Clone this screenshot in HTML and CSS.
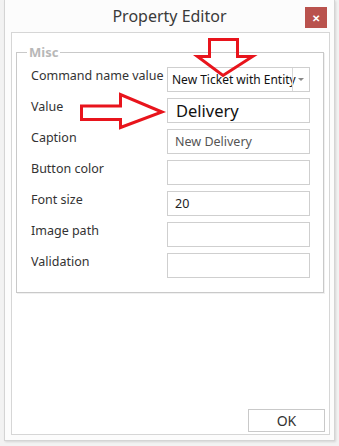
FILE: index.html
```html
<!DOCTYPE html>
<html lang="en">
<head>
  <meta charset="UTF-8">
  <title>Property Editor</title>
  <link rel="stylesheet" href="styles.css">
</head>
<body>
  <div class="window">
    <div class="titlebar">
      <span class="title">Property Editor</span>
      <span class="close">&#x2715;</span>
    </div>

    <div class="panel">
      <fieldset class="group">
        <legend>Misc</legend>

        <div class="row">
          <label>Command name value</label>
          <div class="field combo">
            <span class="combo-text">New Ticket with Entity</span>
            <span class="combo-btn"></span>
          </div>
        </div>
        <div class="row">
          <label>Value</label>
          <div class="field big">Delivery</div>
        </div>
        <div class="row">
          <label>Caption</label>
          <div class="field muted">New Delivery</div>
        </div>
        <div class="row">
          <label>Button color</label>
          <div class="field"></div>
        </div>
        <div class="row">
          <label>Font size</label>
          <div class="field">20</div>
        </div>
        <div class="row">
          <label>Image path</label>
          <div class="field"></div>
        </div>
        <div class="row">
          <label>Validation</label>
          <div class="field"></div>
        </div>
      </fieldset>

      <div class="footer">
        <button class="ok">OK</button>
      </div>
    </div>
  </div>

  <!-- red markers drawn on top of the screenshot -->
  <svg class="marks" width="339" height="446" viewBox="0 0 339 446">
    <polygon points="209.5,39.5 237.5,39.5 237.5,56.5 252.5,56.5 223,75.5 197.5,56.5 209.5,56.5"
             fill="none" stroke="#e8141c" stroke-width="3" stroke-linejoin="miter"/>
    <polygon points="81.5,106 120.5,106 120.5,94.5 162,112 120.5,127.5 120.5,119.5 81.5,119.5"
             fill="none" stroke="#e8141c" stroke-width="3" stroke-linejoin="miter"/>
  </svg>
</body>
</html>
```

FILE: styles.css
```css
body {
  margin: 0;
  width: 339px;
  height: 446px;
  background-color: #f2f2f2;
  font-family: "Noto Sans", "Open Sans", sans-serif;
  position: relative;
  overflow: hidden;
}

.window {
  margin-left: 4px;
  width: 329px;
  height: 440px;
  background-color: #fcfcfc;
  border: 1px solid #d4d4d4;
  border-top: none;
  display: flex;
  flex-direction: column;
  box-shadow: 1px 1px 2px rgba(0, 0, 0, 0.12);
}

.titlebar {
  height: 32px;
  display: flex;
  align-items: center;
  justify-content: center;
  position: relative;
}

.title {
  font-size: 16px;
  color: #3a3a3a;
  margin-top: -1px;
}

.close {
  position: absolute;
  right: 7px;
  top: 7px;
  width: 22px;
  height: 21px;
  background-color: #b9524d;
  color: #fff;
  font-size: 10px;
  font-weight: bold;
  display: flex;
  align-items: center;
  justify-content: center;
}

.panel {
  margin: 0 4px 5px 6px;
  flex: 1;
  background-color: #fff;
  border: 1px solid #d6d6d6;
  display: flex;
  flex-direction: column;
}

.group {
  margin: 14px 5px 0 4px;
  padding: 10px 13px 14px 14px;
  min-width: 0;
  border: 1px solid #c9c9c9;
  box-shadow: 1px 1px 0 #f0f0f0;
  display: flex;
  flex-direction: column;
  gap: 6px;
}

.group legend {
  padding: 0 2px;
  margin-left: -4px;
  font-size: 13px;
  font-weight: bold;
  color: #b8b8b8;
  line-height: 10px;
}

.row {
  display: flex;
  height: 25px;
}

.row label {
  width: 136px;
  flex-shrink: 0;
  font-size: 12.5px;
  color: #333;
  line-height: 16px;
  padding-top: 1px;
}

.field {
  width: 134px;
  height: 23px;
  border: 1px solid #cfcfcf;
  font-size: 12.5px;
  color: #222;
  padding-left: 7px;
  display: flex;
  align-items: center;
  overflow: hidden;
  white-space: nowrap;
}

.field.big {
  font-size: 16.5px;
  padding-left: 8px;
  color: #111;
}

.field.muted {
  color: #555;
}

.combo {
  padding-left: 4px;
  width: 137px;
}

.combo-text {
  width: 120px;
  flex-shrink: 0;
  font-size: 12px;
  color: #111;
}

.combo-btn {
  width: 17px;
  height: 23px;
  flex-shrink: 0;
  border-left: 1px solid #d8d8d8;
  position: relative;
}

.combo-btn::after {
  content: "";
  position: absolute;
  left: 5px;
  top: 10px;
  border-left: 3px solid transparent;
  border-right: 3px solid transparent;
  border-top: 3px solid #888;
}

.footer {
  margin-top: auto;
  display: flex;
  justify-content: flex-end;
  padding: 0 4px 2px 0;
}

.ok {
  width: 77px;
  height: 23px;
  background-color: #fff;
  border: 1px solid #c9c9c9;
  font-family: "Noto Sans", "Open Sans", sans-serif;
  font-size: 14px;
  color: #333;
  padding: 0;
}

.marks {
  position: absolute;
  left: 0;
  top: 0;
}
```
